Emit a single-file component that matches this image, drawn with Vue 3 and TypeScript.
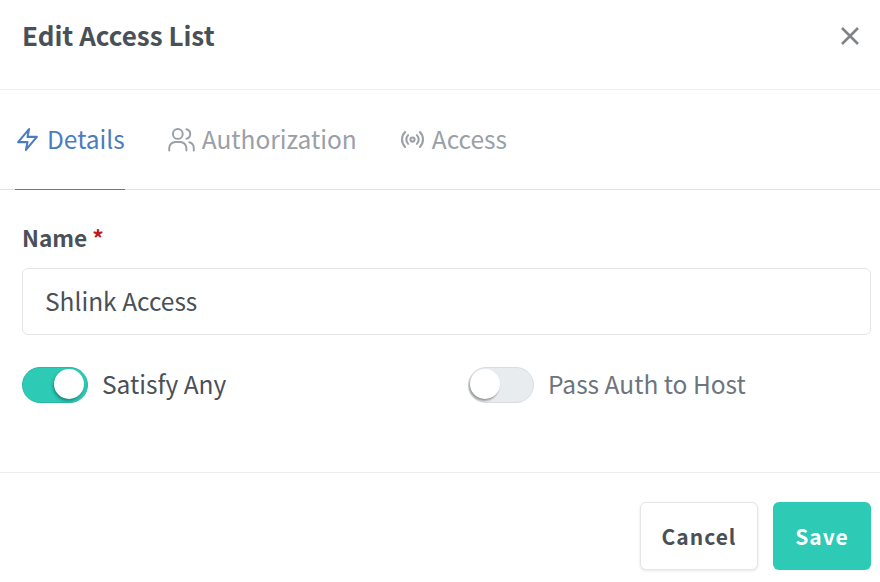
<script setup lang="ts">
import { ref } from 'vue'

const name = ref('Shlink Access')
const satisfyAny = ref(true)
const passAuth = ref(false)
</script>

<template>
  <div class="modal">
    <header class="modal-header">
      <h2 class="title">Edit Access List</h2>
      <button class="close" aria-label="Close">
        <svg width="20" height="20" viewBox="0 0 20 20" fill="none" stroke="currentColor" stroke-width="2.6">
          <path d="M2 2 L18 18 M18 2 L2 18" />
        </svg>
      </button>
    </header>

    <nav class="tabs">
      <a class="tab active">
        <svg class="tab-icon" viewBox="0 0 24 24" fill="none" stroke="currentColor" stroke-width="2" stroke-linejoin="round" stroke-linecap="round">
          <path d="M13.5 2 3 14.5h9L10.5 22 21 9.5h-9z" />
        </svg>
        Details
      </a>
      <a class="tab">
        <svg class="tab-icon users" viewBox="1 2 22 20" fill="none" stroke="currentColor" stroke-width="1.6" stroke-linecap="round" stroke-linejoin="round">
          <circle cx="9" cy="7.5" r="4" />
          <path d="M2 21v-2a5 5 0 0 1 5-5h4a5 5 0 0 1 5 5v2" />
          <path d="M16 3.6a4 4 0 0 1 0 7.8" />
          <path d="M22 21v-2a5 5 0 0 0-3.6-4.8" />
        </svg>
        Authorization
      </a>
      <a class="tab">
        <svg class="tab-icon" viewBox="0 0 24 24" fill="none" stroke="currentColor" stroke-width="2" stroke-linecap="round" stroke-linejoin="round">
          <circle cx="12" cy="12" r="2" />
          <path d="M16.2 7.8a6 6 0 0 1 0 8.4" />
          <path d="M7.8 16.2a6 6 0 0 1 0-8.4" />
          <path d="M19.1 4.9a10 10 0 0 1 0 14.2" />
          <path d="M4.9 19.1a10 10 0 0 1 0-14.2" />
        </svg>
        Access
      </a>
    </nav>

    <section class="body">
      <label class="label">Name <span class="req">*</span></label>
      <input v-model="name" class="input" type="text" />

      <div class="switches">
        <label class="switch-row">
          <input v-model="satisfyAny" class="sr" type="checkbox" />
          <span class="switch" :class="{ on: satisfyAny }"></span>
          <span class="switch-text on-text">Satisfy Any</span>
        </label>
        <label class="switch-row">
          <input v-model="passAuth" class="sr" type="checkbox" />
          <span class="switch" :class="{ on: passAuth }"></span>
          <span class="switch-text">Pass Auth to Host</span>
        </label>
      </div>
    </section>

    <footer class="modal-footer">
      <button class="btn cancel">Cancel</button>
      <button class="btn save">Save</button>
    </footer>
  </div>
</template>

<style>
html, body {
  background: #fff;
}
</style>

<style scoped>
.modal {
  width: 880px;
  height: 582px;
  background: #fff;
  color: #495057;
  font-family: "Noto Sans CJK SC", "Noto Sans", sans-serif;
  overflow: hidden;
}

.modal-header {
  height: 89px;
  box-sizing: content-box;
  border-bottom: 1px solid #eceef0;
  display: flex;
  align-items: flex-start;
  justify-content: space-between;
  padding: 0 20px 0 22px;
}

.title {
  margin: 20px 0 0;
  font-size: 26px;
  font-weight: 700;
  line-height: 30px;
  color: #495057;
}

.close {
  background: none;
  border: 0;
  padding: 0;
  margin-top: 26px;
  display: flex;
  color: #808487;
}

.tabs {
  height: 99px;
  padding-left: 15px;
  border-bottom: 1px solid #dee2e6;
  display: flex;
  gap: 43px;
}

.tab {
  display: flex;
  align-items: center;
  gap: 7px;
  height: 100px;
  box-sizing: border-box;
  padding-bottom: 1px;
  font-size: 24.5px;
  color: #9aa0a8;
  line-height: 1;
}

.tab.active {
  color: #4a7dc0;
  border-bottom: 1px solid #3f80c6;
}

.tab-icon {
  width: 25px;
  height: 25px;
  flex: none;
}

.tab-icon.users {
  width: 27px;
}

.body {
  padding: 34px 9px 0 22px;
}

.label {
  display: block;
  font-size: 22.6px;
  font-weight: 700;
  line-height: 28px;
  color: #495057;
}

.req {
  color: #c01c1c;
}

.input {
  display: block;
  width: 100%;
  height: 67px;
  margin-top: 16px;
  box-sizing: border-box;
  padding: 0 22px 2px;
  border: 1px solid #e3e5e8;
  border-radius: 6px;
  outline: none;
  font: inherit;
  font-size: 24.5px;
  color: #495057;
}

.switches {
  display: grid;
  grid-template-columns: 446px 1fr;
  margin-top: 31px;
}

.switch-row {
  display: flex;
  align-items: center;
  gap: 14px;
  height: 38px;
}

.sr {
  position: absolute;
  opacity: 0;
  width: 0;
  height: 0;
}

.switch {
  position: relative;
  width: 66px;
  height: 36px;
  box-sizing: border-box;
  border-radius: 18px;
  background: #e9ecef;
  border: 1px solid #dadde0;
  flex: none;
}

.switch::after {
  content: "";
  position: absolute;
  top: 1px;
  left: 1px;
  width: 30px;
  height: 30px;
  border-radius: 50%;
  background: #fff;
  box-shadow: -1px 2px 2px rgba(0, 0, 0, 0.35);
}

.switch.on {
  background: #2dcab5;
  border-color: #2ab8a5;
}

.switch.on::after {
  left: 31px;
  box-shadow: -1px 2px 3px rgba(0, 60, 50, 0.45);
}

.switch-text {
  font-size: 24.5px;
  line-height: 36px;
  padding-bottom: 2px;
  color: #6c757d;
}

.switch-text.on-text {
  color: #495057;
}

.modal-footer {
  margin-top: 68px;
  border-top: 1px solid #eceef0;
  padding: 29px 9px 0 0;
  display: flex;
  justify-content: flex-end;
  gap: 15px;
}

.btn {
  height: 68px;
  box-sizing: border-box;
  border-radius: 6px;
  padding-bottom: 2px;
  font: inherit;
  font-size: 21px;
  font-weight: 700;
  letter-spacing: 1px;
}

.cancel {
  width: 118px;
  background: #fff;
  color: #495057;
  border: 1px solid #e4e6e9;
  box-shadow: 0 1px 3px rgba(0, 0, 0, 0.1);
}

.save {
  width: 98px;
  background: #2dcab5;
  color: #fff;
  border: 0;
}
</style>
